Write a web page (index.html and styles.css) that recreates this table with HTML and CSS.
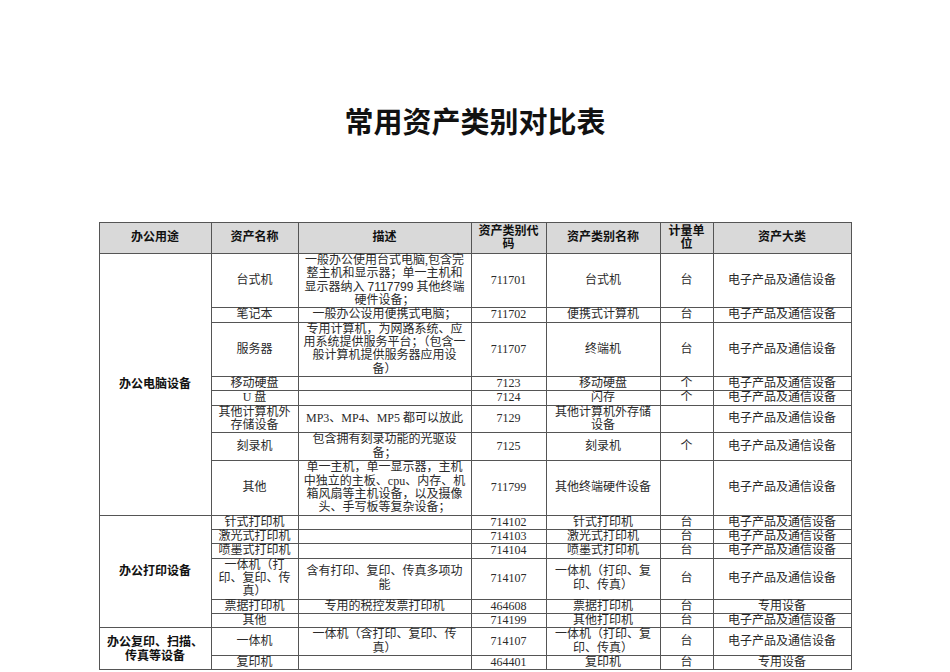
FILE: index.html
```html
<!DOCTYPE html>
<html lang="zh-CN">
<head>
<meta charset="utf-8">
<title>常用资产类别对比表</title>
<link rel="stylesheet" href="styles.css">
</head>
<body>
<div class="page">
  <h1 class="title">常用资产类别对比表</h1>
  <table class="grid">
    <colgroup>
      <col class="c1"><col class="c2"><col class="c3"><col class="c4"><col class="c5"><col class="c6"><col class="c7">
    </colgroup>
    <thead>
      <tr>
        <th>办公用途</th><th>资产名称</th><th>描述</th><th>资产类别代<br>码</th><th>资产类别名称</th><th>计量单<br>位</th><th>资产大类</th>
      </tr>
    </thead>
    <tbody>
      <tr>
        <td class="group" rowspan="8">办公电脑设备</td>
        <td>台式机</td>
        <td>一般办公使用台式电脑,包含完<br>整主机和显示器；单一主机和<br>显示器纳入 <span class="sans">7117799</span> 其他终端<br>硬件设备；</td>
        <td>711701</td><td>台式机</td><td>台</td><td>电子产品及通信设备</td>
      </tr>
      <tr>
        <td>笔记本</td><td>一般办公设用便携式电脑；</td><td>711702</td><td>便携式计算机</td><td>台</td><td>电子产品及通信设备</td>
      </tr>
      <tr>
        <td>服务器</td>
        <td>专用计算机，为网路系统、应<br>用系统提供服务平台；（包含一<br>般计算机提供服务器应用设<br>备）</td>
        <td>711707</td><td>终端机</td><td>台</td><td>电子产品及通信设备</td>
      </tr>
      <tr>
        <td>移动硬盘</td><td></td><td>7123</td><td>移动硬盘</td><td>个</td><td>电子产品及通信设备</td>
      </tr>
      <tr>
        <td>U 盘</td><td></td><td>7124</td><td>闪存</td><td>个</td><td>电子产品及通信设备</td>
      </tr>
      <tr>
        <td>其他计算机外<br>存储设备</td><td>MP3、MP4、MP5 都可以放此</td><td>7129</td><td>其他计算机外存储<br>设备</td><td></td><td>电子产品及通信设备</td>
      </tr>
      <tr>
        <td>刻录机</td><td>包含拥有刻录功能的光驱设<br>备；</td><td>7125</td><td>刻录机</td><td>个</td><td>电子产品及通信设备</td>
      </tr>
      <tr>
        <td>其他</td>
        <td>单一主机，单一显示器，主机<br>中独立的主板、cpu、内存、机<br>箱风扇等主机设备，以及摄像<br>头、手写板等复杂设备；</td>
        <td>711799</td><td>其他终端硬件设备</td><td></td><td>电子产品及通信设备</td>
      </tr>
      <tr>
        <td class="group" rowspan="6">办公打印设备</td>
        <td>针式打印机</td><td></td><td>714102</td><td>针式打印机</td><td>台</td><td>电子产品及通信设备</td>
      </tr>
      <tr>
        <td>激光式打印机</td><td></td><td>714103</td><td>激光式打印机</td><td>台</td><td>电子产品及通信设备</td>
      </tr>
      <tr>
        <td>喷墨式打印机</td><td></td><td>714104</td><td>喷墨式打印机</td><td>台</td><td>电子产品及通信设备</td>
      </tr>
      <tr>
        <td>一体机（打<br>印、复印、传<br>真）</td><td>含有打印、复印、传真多项功<br>能</td><td>714107</td><td>一体机（打印、复<br>印、传真）</td><td>台</td><td>电子产品及通信设备</td>
      </tr>
      <tr>
        <td>票据打印机</td><td>专用的税控发票打印机</td><td>464608</td><td>票据打印机</td><td>台</td><td>专用设备</td>
      </tr>
      <tr>
        <td>其他</td><td></td><td>714199</td><td>其他打印机</td><td>台</td><td>电子产品及通信设备</td>
      </tr>
      <tr>
        <td class="group" rowspan="2">办公复印、扫描、<br>传真等设备</td>
        <td>一体机</td><td>一体机（含打印、复印、传<br>真）</td><td>714107</td><td>一体机（打印、复<br>印、传真）</td><td>台</td><td>电子产品及通信设备</td>
      </tr>
      <tr>
        <td>复印机</td><td></td><td>464401</td><td>复印机</td><td>台</td><td>专用设备</td>
      </tr>
    </tbody>
  </table>
</div>
</body>
</html>
```

FILE: styles.css
```css
html, body {
  margin: 0;
  padding: 0;
  background: #ffffff;
}

.page {
  width: 950px;
  padding-top: 100px;
}

.title {
  margin: 0;
  height: 40px;
  line-height: 40px;
  text-align: center;
  font-family: "Noto Sans CJK SC", sans-serif;
  font-size: 29px;
  font-weight: 700;
  color: #111;
}

.grid {
  margin: 82px auto 0;
  width: 752px;
  table-layout: fixed;
  border-collapse: collapse;
  border: 1px solid #555;
  font-family: "Liberation Serif", "Noto Sans CJK SC", serif;
  font-size: 12px;
  color: #2a2a2a;
}

.c1 { width: 112px; }
.c2 { width: 87px; }
.c3 { width: 173px; }
.c4 { width: 75px; }
.c5 { width: 114px; }
.c6 { width: 53px; }
.c7 { width: 138px; }

.grid th {
  height: 30px;
  padding: 0;
  background: #d9d9d9;
  border: 1px solid #555;
  font-family: "Liberation Sans", "Noto Sans CJK SC", sans-serif;
  font-size: 12px;
  font-weight: 700;
  line-height: 13.5px;
  color: #111;
  text-align: center;
  vertical-align: middle;
}

.grid td {
  padding: 0;
  border: 1px solid #555;
  line-height: 13.35px;
  text-align: center;
  vertical-align: middle;
  white-space: nowrap;
}

.grid td.group {
  font-family: "Liberation Sans", "Noto Sans CJK SC", sans-serif;
  font-weight: 700;
  line-height: 14px;
  color: #111;
}

.sans {
  font-family: "Liberation Sans", sans-serif;
}
```
